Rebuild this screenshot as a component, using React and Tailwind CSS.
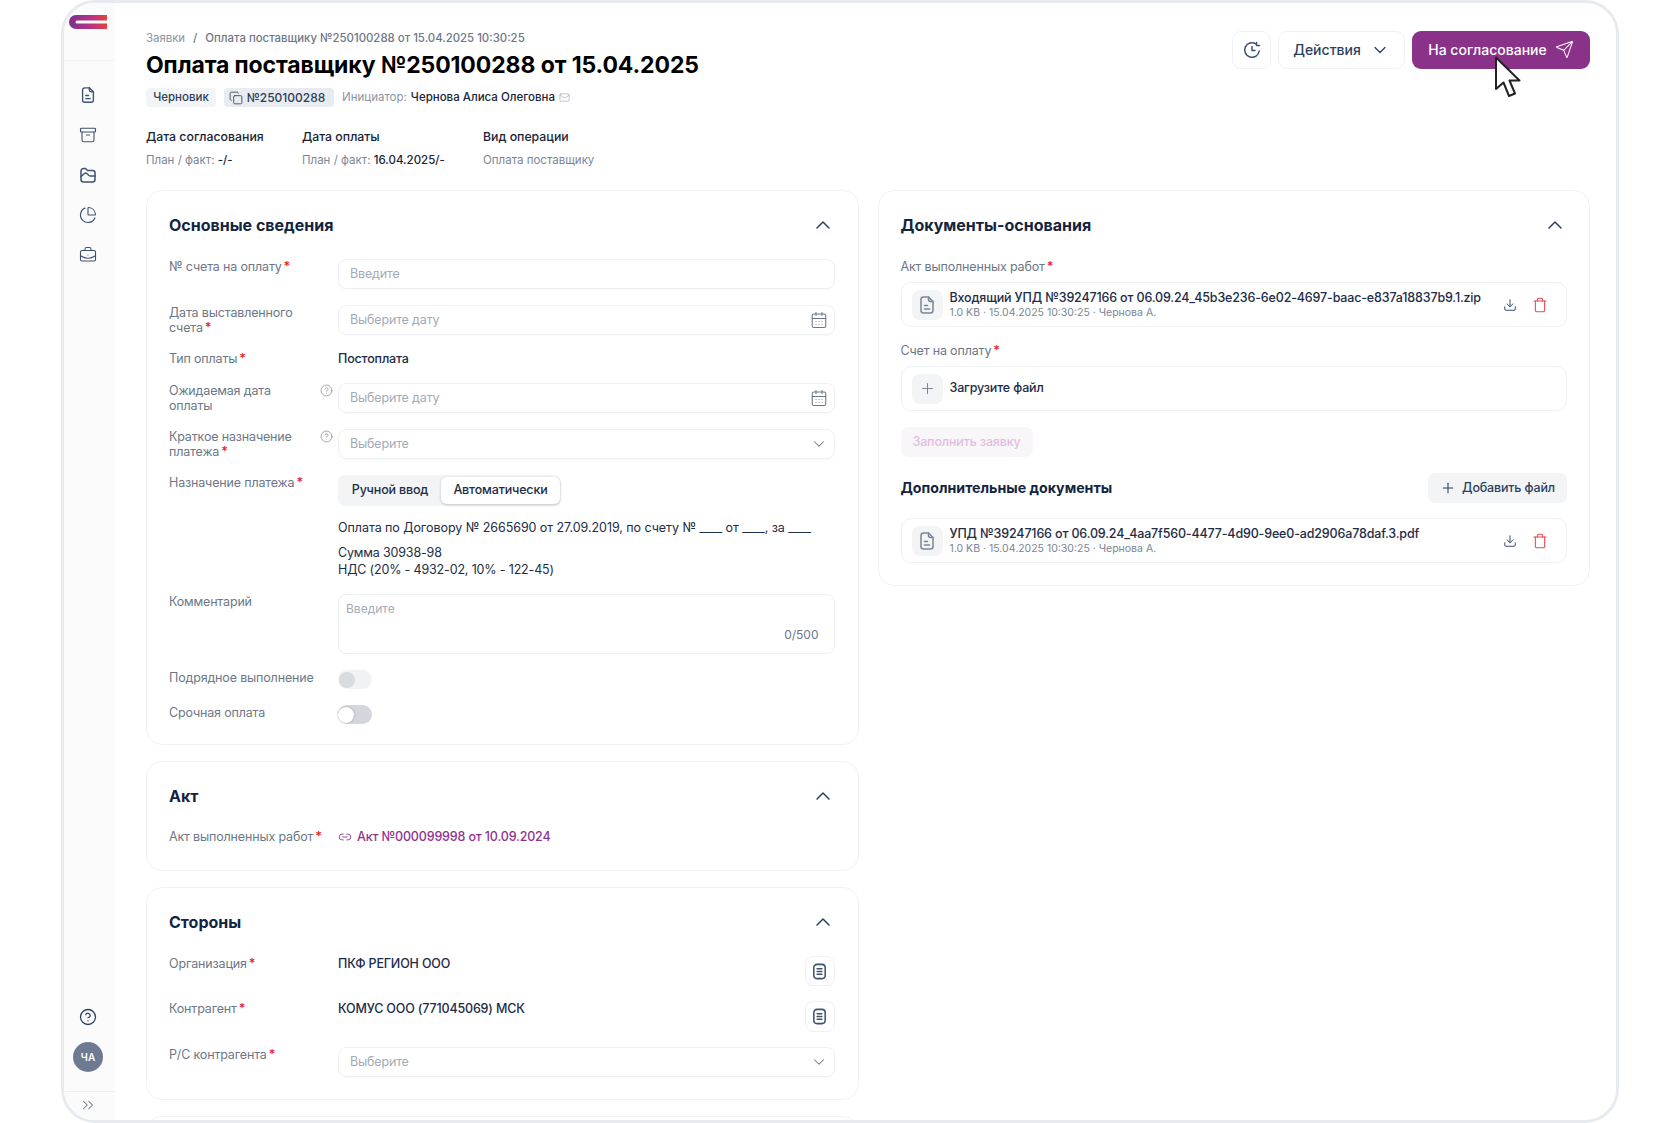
import { Archive, BriefcaseBusiness, CalendarDays, ChartPie, ChevronDown, ChevronUp, ChevronsRight, CircleHelp, Copy, Download, Link2, Mail, Plus, Send, Trash } from "lucide-react";

function DocIcon({ className }) {
  return (
    <svg viewBox="0 0 20 20" fill="none" stroke="currentColor" strokeWidth="1.5" strokeLinecap="round" strokeLinejoin="round" className={className}>
      <path d="M11.5 2H6.5A2.5 2.5 0 0 0 4 4.500v11A2.500 2.500 0 0 0 6.500 18h7a2.500 2.500 0 0 0 2.500-2.500V6.500L11.500 2Z" />
      <path d="M11.500 2v2.500a2 2 0 0 0 2 2H16" />
      <path d="M7.500 10.500h3M7.500 14h5" />
    </svg>
  );
}

function FolderIcon({ className }) {
  return (
    <svg viewBox="0 0 20 20" fill="none" stroke="currentColor" strokeWidth="1.5" strokeLinecap="round" strokeLinejoin="round" className={className}>
      <path d="M3 6A2.500 2.500 0 0 1 5.500 3.500h2l2 2H14.500A2.500 2.500 0 0 1 17 8v6.500A2.500 2.500 0 0 1 14.500 17h-9A2.500 2.500 0 0 1 3 14.500V6Z" />
      <path d="M3 11.500 6.500 8.500c.8-.7 1.500-.7 2.300 0l2.200 2c.4.3.7.5 1.200.5H17" />
    </svg>
  );
}

function ListDocIcon({ className }) {
  return (
    <svg viewBox="0 0 20 20" fill="none" stroke="currentColor" strokeWidth="1.6" strokeLinecap="round" className={className}>
      <rect x="4" y="2.500" width="12" height="15" rx="3.500" />
      <path d="M7.500 7h5M7.500 10h5M7.500 13h5" />
    </svg>
  );
}

function HistoryIcon({ className }) {
  return (
    <svg viewBox="0 0 20 20" fill="none" stroke="currentColor" strokeWidth="1.5" strokeLinecap="round" strokeLinejoin="round" className={className}>
      <path d="M17.200 11A7.300 7.300 0 1 1 13.800 3.800" />
      <path d="M10 6.500V10.500H13" />
      <path d="M14.500 2.500v3h3" />
    </svg>
  );
}

function Cursor() {
  return (
    <svg viewBox="0 0 26 42" className="absolute left-[1494px] top-[56px] h-[42px] w-[27px]">
      <path d="M1.500 1.500 1.500 33 9 26.500 14.500 40 20.500 37.500 15 24.500 25 24.500Z" fill="#fff" stroke="#222" strokeWidth="2" strokeLinejoin="round" />
    </svg>
  );
}

function Req() {
  return <span className="ml-[2px] font-semibold text-[#e5252a]">*</span>;
}

function Card({ title, children, className = "" }) {
  return (
    <section className={`rounded-[16px] border border-[#f0f2f5] bg-white pl-[22px] pt-[22px] ${className}`}>
      <div className="flex h-6 items-center justify-between">
        <h2 className="text-[16px] font-bold text-[#13243f]">{title}</h2>
        <ChevronUp className="h-[24px] w-[24px] text-[#2c4060]" strokeWidth={1.5} />
      </div>
      {children}
    </section>
  );
}

function Row({ label, req, help, children, className = "" }) {
  return (
    <div className={`grid grid-cols-[169px_1fr] ${className}`}>
      <div className="relative text-[12.5px] leading-[15px] tracking-[-0.16px] text-[#6c7788]">
        {label}
        {req && <Req />}
        {help && <CircleHelp className="absolute right-[5px] top-[1px] h-[13px] w-[13px] text-[#8a94a3]" strokeWidth={1.5} />}
      </div>
      <div>{children}</div>
    </div>
  );
}

function Field({ placeholder, icon }) {
  return (
    <div className="flex h-[30px] items-center justify-between rounded-[8px] border border-[#eef0f3] pl-[11px] pr-[6px] text-[12.5px] tracking-[-0.16px] text-[#a3abb8] shadow-[0_1px_1px_rgba(20,30,50,0.02)]">
      <span>{placeholder}</span>
      {icon === "date" && <CalendarDays className="h-[18px] w-[18px] text-[#6c7788]" strokeWidth={1.4} />}
      {icon === "select" && <ChevronDown className="h-[18px] w-[18px] text-[#6c7788]" strokeWidth={1.4} />}
    </div>
  );
}

function Toggle({ knob, track }) {
  return (
    <div className={`flex h-[19px] w-[34px] items-center rounded-full ${track}`}>
      <div className={`h-[16px] w-[16px] rounded-full ${knob}`} />
    </div>
  );
}

function FileRow({ name, className = "" }) {
  return (
    <div className={`flex h-[45px] items-center rounded-[10px] border border-[#eef0f3] pl-[10px] pr-[18px] ${className}`}>
      <div className="flex h-[30px] w-[31px] items-center justify-center rounded-[8px] bg-[#f2f4f6]">
        <DocIcon className="h-[20px] w-[20px] text-[#7b8698]" />
      </div>
      <div className="ml-[7px] min-w-0 flex-1">
        <div className="text-[12.5px] font-medium leading-[15px] tracking-[-0.16px] text-[#1d2c47]">{name}</div>
        <div className="text-[10.5px] leading-[15px] text-[#7b8698]">1.0 KB · 15.04.2025 10:30:25 · Чернова А.</div>
      </div>
      <Download className="h-[14px] w-[14px] text-[#2c4060]" strokeWidth={1.6} />
      <Trash className="ml-[15px] h-[16px] w-[16px] text-[#e5484d]" strokeWidth={1.6} />
    </div>
  );
}

function Meta({ label, children, className = "" }) {
  return (
    <div className={className}>
      <div className="text-[12.3px] font-medium leading-4 text-[#1a2438]">{label}</div>
      <div className="mt-[7px] text-[11.5px] leading-4 text-[#7b8698]">{children}</div>
    </div>
  );
}

export default function App() {
  return (
    <div className="relative h-[1123px] overflow-hidden bg-white px-[61px] font-[Inter,sans-serif]">
      <div className="flex h-[1123px] overflow-hidden rounded-[34px] border-[3px] border-[#e7ebf0] bg-white">
        {/* sidebar */}
        <aside className="flex w-[51px] shrink-0 flex-col items-center bg-[#fbfbfc] pr-[3px] text-[#3d5170]">
          <div className="-mr-[3px] flex h-[58px] w-[51px] items-start justify-center border-b border-[#f0f2f5] pr-[3px] pt-[12px]">
            <svg viewBox="0 0 38 14" className="h-[14px] w-[38px]">
              <defs>
                <linearGradient id="logo" x1="0" x2="1" y1="0" y2="0">
                  <stop offset="0" stopColor="#7d2f8e" />
                  <stop offset="0.55" stopColor="#b3338a" />
                  <stop offset="1" stopColor="#e9413a" />
                </linearGradient>
              </defs>
              <path d="M38 0H7a7 7 0 0 0 0 14h31V8.500H8a1.500 1.500 0 0 1 0-3h30Z" fill="url(#logo)" />
            </svg>
          </div>
          <div className="pt-[14px]">
            <div className="flex h-10 items-center justify-center"><DocIcon className="h-[18px] w-[18px]" /></div>
            <div className="flex h-10 items-center justify-center"><Archive className="h-[18px] w-[18px]" strokeWidth={1.5} /></div>
            <div className="flex h-10 items-center justify-center"><FolderIcon className="h-[20px] w-[20px]" /></div>
            <div className="flex h-10 items-center justify-center"><ChartPie className="h-[18px] w-[18px]" strokeWidth={1.5} /></div>
            <div className="flex h-10 items-center justify-center"><BriefcaseBusiness className="h-[18px] w-[18px]" strokeWidth={1.5} /></div>
          </div>
          <CircleHelp className="mt-auto h-[18px] w-[18px] text-[#2c4060]" strokeWidth={1.7} />
          <div className="mb-[19px] mt-[16px] flex h-[30px] w-[30px] items-center justify-center rounded-full bg-[#6e7a91] text-[10px] font-semibold text-white">ЧА</div>
          <div className="-mr-[3px] flex h-[29px] w-[51px] items-center justify-center border-t border-[#eceff3] pb-[3px] pr-[3px]">
            <ChevronsRight className="h-[18px] w-[18px] text-[#6c7788]" strokeWidth={1.4} />
          </div>
        </aside>

        <main className="min-w-0 flex-1 pl-[31px] pr-[26px] pt-[27px]">
          {/* header */}
          <div className="flex items-start justify-between">
            <div>
              <div className="flex text-[11.4px] font-medium leading-4 text-[#6c7788]">
                <span className="font-normal text-[#8a94a3]">Заявки</span>
                <span className="mx-[8px]">/</span>
                <span>Оплата поставщику №250100288 от 15.04.2025 10:30:25</span>
              </div>
              <h1 className="mt-[4px] text-[23px] font-bold leading-[30px] tracking-[-0.1px] text-black">Оплата поставщику №250100288 от 15.04.2025</h1>
              <div className="mt-[8px] flex h-[19px] items-center text-[11.5px]">
                <span className="flex h-[19px] w-[70px] items-center justify-center rounded-[4px] bg-[#f2f4f6] font-medium text-[#2c3c57]">Черновик</span>
                <span className="ml-[8px] flex h-[19px] w-[110px] items-center justify-center gap-[4px] rounded-[4px] bg-[#e8ecf1] pr-[4px] text-[12px] font-medium text-[#2c3c57]">
                  <Copy className="h-[14px] w-[14px]" strokeWidth={1.4} />
                  №250100288
                </span>
                <span className="ml-[8px] text-[#8a94a3]">Инициатор:</span>
                <span className="ml-[4px] font-medium text-[#1a2438]">Чернова Алиса Олеговна</span>
                <Mail className="ml-[4px] h-[11px] w-[11px] text-[#a3abb8]" strokeWidth={1.5} />
              </div>
            </div>
            <div className="mt-[1px] flex gap-[7px]">
              <button className="flex h-[38px] w-[39px] items-center justify-center rounded-[9px] border border-[#eff1f4] text-[#3d5170]">
                <HistoryIcon className="h-[20px] w-[20px]" />
              </button>
              <button className="flex h-[38px] w-[127px] items-center justify-center gap-[9px] rounded-[9px] border border-[#eff1f4] pb-[1px] text-[14px] font-medium text-[#2c3f5e]">
                Действия
                <ChevronDown className="h-[20px] w-[20px]" strokeWidth={1.5} />
              </button>
              <button className="flex h-[38px] w-[178px] items-center justify-center gap-[8px] rounded-[9px] bg-[#8a3189] pb-[1px] text-[14px] font-medium text-white">
                На согласование
                <Send className="h-[19px] w-[19px]" strokeWidth={1.3} />
              </button>
            </div>
          </div>

          {/* dates */}
          <div className="mt-[22px] flex">
            <Meta label="Дата согласования" className="w-[156px]">
              План / факт: <span className="font-medium text-[#1a2438]">-/-</span>
            </Meta>
            <Meta label="Дата оплаты" className="w-[181px]">
              План / факт: <span className="font-medium text-[#1a2438]">16.04.2025/-</span>
            </Meta>
            <Meta label="Вид операции">Оплата поставщику</Meta>
          </div>

          <div className="mt-[22px] grid grid-cols-2 items-start gap-[19px]">
            <div className="space-y-4">
              <Card title="Основные сведения" className="pb-[20px] pr-[23px]">
                <div className="mt-[22px] space-y-4">
                  <Row label="№ счета на оплату" req><Field placeholder="Введите" /></Row>
                  <Row label={<>Дата выставленного<br />счета</>} req><Field placeholder="Выберите дату" icon="date" /></Row>
                  <Row label="Тип оплаты" req>
                    <div className="text-[12.5px] font-medium leading-4 tracking-[-0.16px] text-[#1d2c47]">Постоплата</div>
                  </Row>
                  <Row label={<>Ожидаемая дата<br />оплаты</>} help><Field placeholder="Выберите дату" icon="date" /></Row>
                  <Row label={<>Краткое назначение<br />платежа</>} req help><Field placeholder="Выберите" icon="select" /></Row>
                  <Row label="Назначение платежа" req>
                    <div className="flex h-[31px] w-[223px] items-center rounded-[7px] bg-[#f2f4f6] px-[1px] text-[12.5px] font-medium tracking-[-0.16px] text-[#1d2c47]">
                      <span className="w-[102px] text-center">Ручной ввод</span>
                      <span className="flex h-[27px] w-[119px] items-center justify-center rounded-[6px] bg-white shadow-[0_1px_3px_rgba(20,30,50,0.22)]">Автоматически</span>
                    </div>
                    <div className="mt-[13px] text-[12.5px] leading-[17px] tracking-[-0.16px] text-[#1d2c47]">
                      <p className="mb-[8px] tracking-[-0.06px]">Оплата по Договору № 2665690 от 27.09.2019, по счету № ____ от ____, за ____</p>
                      <p>Сумма 30938-98</p>
                      <p>НДС (20% - 4932-02, 10% - 122-45)</p>
                    </div>
                  </Row>
                  <Row label="Комментарий">
                    <div className="flex h-[60px] flex-col justify-between rounded-[8px] border border-[#eef0f3] px-[7px] pb-[10px] pt-[6px] text-[12px] leading-4">
                      <span className="text-[#a3abb8]">Введите</span>
                      <span className="self-end pr-[8px] text-[#6c7788]">0/500</span>
                    </div>
                  </Row>
                  <Row label="Подрядное выполнение">
                    <Toggle track="bg-[#f1f2f4] pl-[1px]" knob="bg-[#d8dbe0]" />
                  </Row>
                  <Row label="Срочная оплата">
                    <Toggle track="bg-[#d3d6dc]" knob="bg-white shadow-[0_0_2px_rgba(0,0,0,0.35)]" />
                  </Row>
                </div>
              </Card>

              <Card title="Акт" className="pb-[26px] pr-[23px]">
                <div className="mt-[21px]">
                  <Row label="Акт выполненных работ" req>
                    <div className="flex items-center text-[12.5px] font-medium leading-[15px] tracking-[-0.16px] text-[#8f358e]">
                      <Link2 className="mr-[5px] h-[14px] w-[14px]" strokeWidth={1.5} />
                      Акт №000099998 от 10.09.2024
                    </div>
                  </Row>
                </div>
              </Card>

              <Card title="Стороны" className="pb-[22px] pr-[23px]">
                <div className="mt-[22px] space-y-[15px]">
                  <Row label="Организация" req>
                    <div className="flex items-start justify-between text-[12.5px] font-medium leading-4 tracking-[-0.16px] text-[#1d2c47]">
                      ПКФ РЕГИОН ООО
                      <button className="flex h-[30px] w-[30px] items-center justify-center rounded-[8px] border border-[#eef0f3] text-[#3d5170]">
                        <ListDocIcon className="h-[19px] w-[19px]" />
                      </button>
                    </div>
                  </Row>
                  <Row label="Контрагент" req>
                    <div className="flex items-start justify-between text-[12.5px] font-medium leading-4 tracking-[-0.16px] text-[#1d2c47]">
                      КОМУС ООО (771045069) МСК
                      <button className="flex h-[31px] w-[30px] items-center justify-center rounded-[8px] border border-[#eef0f3] text-[#3d5170]">
                        <ListDocIcon className="h-[19px] w-[19px]" />
                      </button>
                    </div>
                  </Row>
                  <Row label="Р/С контрагента" req><Field placeholder="Выберите" icon="select" /></Row>
                </div>
              </Card>

              <div className="h-10 rounded-[16px] border border-[#f0f2f5]" />
            </div>

            <Card title="Документы-основания" className="pb-[22px] pr-[22px]">
              <div className="mt-[22px] text-[12.5px] leading-[15px] tracking-[-0.16px] text-[#6c7788]">Акт выполненных работ<Req /></div>
              <FileRow name="Входящий УПД №39247166 от 06.09.24_45b3e236-6e02-4697-baac-e837a18837b9.1.zip" className="mt-[8px]" />
              <div className="mt-[16px] text-[12.5px] leading-[15px] tracking-[-0.16px] text-[#6c7788]">Счет на оплату<Req /></div>
              <div className="mt-[8px] flex h-[45px] items-center rounded-[10px] border border-[#eef0f3] pl-[10px]">
                <div className="flex h-[30px] w-[31px] items-center justify-center rounded-[8px] bg-[#f2f4f6]">
                  <Plus className="h-[17px] w-[17px] text-[#7b8698]" strokeWidth={1.5} />
                </div>
                <span className="ml-[7px] text-[12.5px] font-medium tracking-[-0.16px] text-[#1d2c47]">Загрузите файл</span>
              </div>
              <button className="mt-[16px] flex h-[30px] w-[132px] items-center justify-center rounded-[7px] bg-[#f9f6fa] text-[12.5px] font-medium tracking-[-0.16px] text-[#e3bde0]">Заполнить заявку</button>
              <div className="mt-[16px] flex h-[30px] items-center justify-between">
                <h3 className="text-[14.2px] font-bold text-[#13243f]">Дополнительные документы</h3>
                <button className="flex h-[30px] w-[139px] items-center justify-center gap-[6px] rounded-[7px] bg-[#f2f4f6] text-[12.5px] font-medium tracking-[-0.16px] text-[#2c3f5e]">
                  <Plus className="h-[16px] w-[16px]" strokeWidth={1.6} />
                  Добавить файл
                </button>
              </div>
              <FileRow name="УПД №39247166 от 06.09.24_4aa7f560-4477-4d90-9ee0-ad2906a78daf.3.pdf" className="mt-[15px]" />
            </Card>
          </div>
        </main>
      </div>
      <Cursor />
    </div>
  );
}
